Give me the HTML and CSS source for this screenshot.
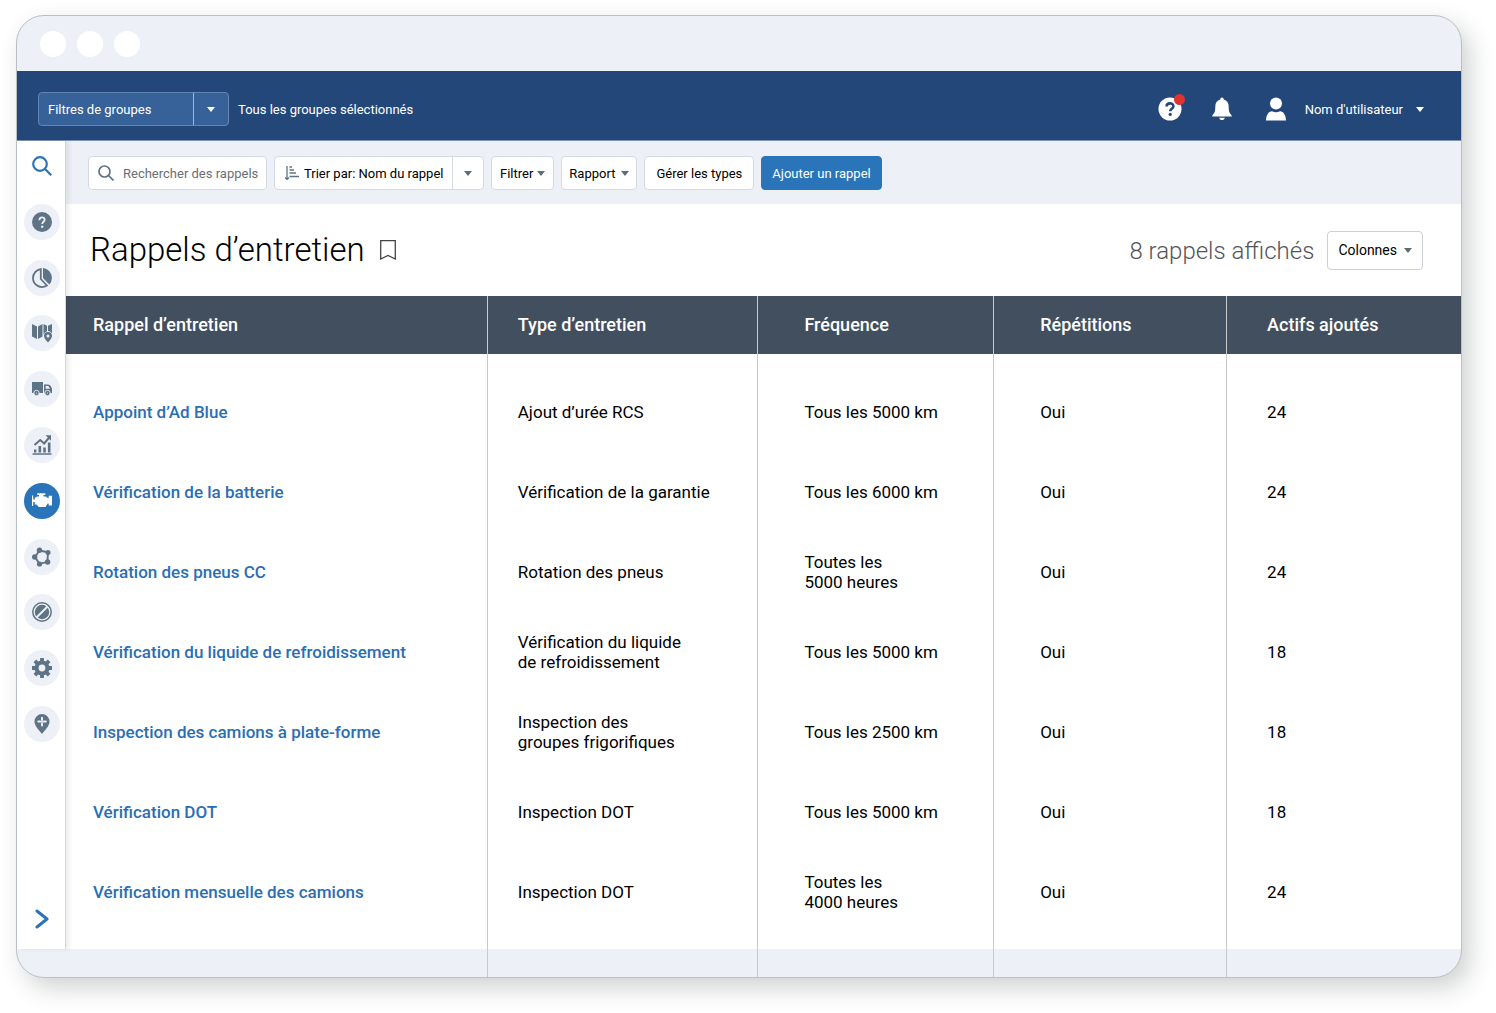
FILE: index.html
```html
<!doctype html>
<html lang="fr">
<head>
    <meta charset="utf-8">
    <meta name="viewport" content="width=device-width, initial-scale=1">
    <title>Rappels d’entretien</title>
    <link rel="stylesheet" href="styles.css">
</head>
<body>
<div class="window">
    <div class="titlebar">
        <span class="dot"></span>
        <span class="dot"></span>
        <span class="dot"></span>
    </div>

    <header class="topbar">
        <div class="split split-dark">
            <select class="split-select" aria-label="Filtres de groupes">
                <option>Filtres de groupes</option>
            </select>
            <span class="split-arrow"><i class="caret"></i></span>
        </div>
        <span class="groups">Tous les groupes sélectionnés</span>

        <div class="account">
            <button class="icon-btn help" aria-label="Aide">
                <svg width="24" height="24" viewBox="0 0 24 24">
                    <circle cx="12" cy="12" r="11.5" fill="#fff"/>
                    <path d="M8.600 9.600c0-4.300 6.800-4.200 6.800-.4 0 2.400-3.200 2.500-3.200 5" fill="none" stroke="#24477a" stroke-width="2.600"/>
                    <circle cx="12.200" cy="17.400" r="1.600" fill="#24477a"/>
                </svg>
                <span class="badge"></span>
            </button>
            <button class="icon-btn" aria-label="Notifications">
                <svg width="20" height="24" viewBox="0 0 20 24">
                    <path d="M10 .5c1 0 1.700.7 1.700 1.900 3.300.8 5 3.400 5 7.100 0 5 .8 6.800 3 8.900v1.100H.3v-1.100c2.200-2.100 3-3.900 3-8.900 0-3.700 1.700-6.300 5-7.100C8.300 1.200 9 .5 10 .5zM7.200 20.700h5.600c-.4 3.200-5.200 3.200-5.600 0z" fill="#fff"/>
                </svg>
            </button>
            <button class="user">
                <svg width="20" height="24" viewBox="0 0 20 24">
                    <circle cx="10" cy="6.500" r="6" fill="#fff"/>
                    <path d="M0 23.500c0-5 2.500-9.300 6-9.300 2.500 1.300 5.500 1.300 8 0 3.500 0 6 4.300 6 9.300z" fill="#fff"/>
                </svg>
                <span>Nom d'utilisateur</span>
                <i class="caret"></i>
            </button>
        </div>
    </header>

    <div class="content">
        <nav class="sidebar">
            <div class="side-links">
                <a href="#" class="side-link plain" aria-label="Rechercher">
                    <svg width="20" height="20" viewBox="0 0 20 20" fill="none" stroke="#2a74b9" stroke-width="2.200">
                        <circle cx="8" cy="8" r="6.800"/><path d="M12.800 12.800l6.400 6.400"/>
                    </svg>
                </a>
                <a href="#" class="side-link" aria-label="Aide">
                    <svg width="20" height="20" viewBox="0 0 20 20">
                        <circle cx="10" cy="10" r="10"/>
                        <path d="M7.400 8.200c0-3.700 5.300-3.500 5.300-.4 0 2-2.500 2-2.500 4.300" fill="none" stroke="#edf0f6" stroke-width="1.800"/>
                        <circle cx="10.200" cy="14.700" r="1.200" fill="#edf0f6"/>
                    </svg>
                </a>
                <a href="#" class="side-link" aria-label="Tableau de bord">
                    <svg width="20" height="20" viewBox="0 0 20 20">
                        <path d="M8.800 1.100A9 9 0 0 0 1 10a9 9 0 0 0 13.900 7.500L8.800 11z" fill="none" stroke="#5f7386" stroke-width="1.800"/>
                        <path d="M11 0a10 10 0 0 1 6.300 16.500L11 10z"/>
                    </svg>
                </a>
                <a href="#" class="side-link" aria-label="Carte">
                    <svg width="20" height="20" viewBox="0 0 20 20">
                        <path d="M0 1l5 2.500V16l-5-2.500zM6 3.500L10.500 1v12.500L6 16zM11.500 1L15 2.800v5.400c-2.700.8-4 3.300-3.500 5.300zM16 2.800L20 1v9.500c-.8-1.700-2.300-2.600-4-2.600z"/>
                        <path fill-rule="evenodd" d="M16 9a4 4 0 0 1 4 4c0 2.500-2.500 4.500-4 6.500-1.500-2-4-4-4-6.500a4 4 0 0 1 4-4zm0 2.500a1.500 1.500 0 1 0 0 3 1.500 1.500 0 0 0 0-3z"/>
                    </svg>
                </a>
                <a href="#" class="side-link" aria-label="Véhicules">
                    <svg width="20" height="20" viewBox="0 0 20 20">
                        <path fill-rule="evenodd" d="M0 3h11v11H0zM12 5.500h4.200c1.800 0 3.800 3 3.800 4.500v4h-8zm1.600 1.600v2.700h4.200c-.3-1.200-1-2.700-2-2.700z"/>
                        <g stroke="#edf0f6" stroke-width=".9"><circle cx="4.500" cy="14" r="2.700"/><circle cx="15.500" cy="14" r="2.700"/></g>
                        <circle cx="4.500" cy="14" r=".6" fill="#edf0f6"/><circle cx="15.500" cy="14" r=".6" fill="#edf0f6"/>
                    </svg>
                </a>
                <a href="#" class="side-link" aria-label="Activité">
                    <svg width="20" height="20" viewBox="0 0 20 20">
                        <path d="M.5 18.300h19v1.500H.5zM2 14.500h2.400v3H2zM6.500 11h2.600v6.500H6.500zM11.200 12.500h2.600v5h-2.600zM15.900 7.500h2.600v10h-2.600zM13.500.3H19v5.500z"/>
                        <path d="M2.500 10l5.700-5 4 3.500 5-6" fill="none" stroke="#5f7386" stroke-width="2"/>
                    </svg>
                </a>
                <a href="#" class="side-link active" aria-label="Entretien">
                    <svg width="20" height="20" viewBox="0 0 20 20">
                        <path d="M0 4.500h1.200v4h1.600V6.700L5 5.500h2V4H5.300V2.300h8V4h-1.800v1.500H14L15.700 7h1V4.800H20v9.700h-3.300v-2h-1L13.500 16H6.800l-2.300-2.500H2.800V11H1.200v4H0z"/>
                    </svg>
                </a>
                <a href="#" class="side-link" aria-label="Zones">
                    <svg width="20" height="20" viewBox="0 0 20 20">
                        <path d="M7.500 3.500l8.500 1.700-.6 9.600-7.900 2L3 10z" fill="none" stroke="#5f7386" stroke-width="1.900"/>
                        <circle cx="7.500" cy="3.200" r="2.700"/><circle cx="16" cy="5.400" r="2.500"/><circle cx="15.600" cy="15" r="2.700"/><circle cx="7.500" cy="17" r="2.600"/><circle cx="2.700" cy="10" r="2.700"/>
                    </svg>
                </a>
                <a href="#" class="side-link" aria-label="Règles">
                    <svg width="20" height="20" viewBox="0 0 20 20">
                        <circle cx="10" cy="10" r="9.200" fill="none" stroke="#5f7386" stroke-width="1.500"/>
                        <circle cx="10" cy="10" r="7.200"/>
                        <path d="M4.500 15.500l11-11" stroke="#edf0f6" stroke-width="2"/>
                    </svg>
                </a>
                <a href="#" class="side-link" aria-label="Administration">
                    <svg width="20" height="20" viewBox="0 0 20 20">
                        <circle cx="10" cy="10" r="5.500" fill="none" stroke="#5f7386" stroke-width="4.200"/>
                        <path d="M10 0v4M10 16v4M0 10h4M16 10h4M2.900 2.900l3 3M14.100 14.100l3 3M2.900 17.100l3-3M14.100 5.900l3-3" stroke="#5f7386" stroke-width="3.800"/>
                    </svg>
                </a>
                <a href="#" class="side-link" aria-label="Lieux">
                    <svg width="20" height="20" viewBox="0 0 20 20">
                        <path d="M10 0a7.500 7.500 0 0 1 7.500 7.500c0 4.500-4.500 8.500-7.500 12.500-3-4-7.500-8-7.500-12.500A7.500 7.500 0 0 1 10 0z"/>
                        <path d="M10 3.800v2M10 9.400v2M6.200 7.600h2M11.800 7.600h2" stroke="#edf0f6" stroke-width="2" stroke-linecap="round"/>
                        <path d="M10 4v7.200M6.400 7.600h7.200" stroke="#edf0f6" stroke-width=".9"/>
                    </svg>
                </a>
            </div>
            <button class="expand" aria-label="Développer le menu">
                <svg width="14" height="20" viewBox="0 0 14 20" fill="none" stroke="#2a74b9" stroke-width="3" stroke-linecap="round" stroke-linejoin="round">
                    <path d="M2 2l10 8-10 8"/>
                </svg>
            </button>
        </nav>

        <main class="main">
            <div class="toolbar">
                <label class="search">
                    <svg width="16" height="16" viewBox="0 0 16 16" fill="none" stroke="#5f7386" stroke-width="1.700">
                        <circle cx="6.500" cy="6.500" r="5.500"/><path d="M10.500 10.500l5 5"/>
                    </svg>
                    <input type="text" placeholder="Rechercher des rappels" aria-label="Rechercher des rappels">
                </label>
                <div class="split sort">
                    <svg class="sort-icon" width="14" height="14" viewBox="0 0 14 14" fill="none" stroke="#5f7386" stroke-width="1.300">
                        <path d="M2 0v13M0 11.500l2 2 2-2M4.500 1h2.500M4.500 4h4.500M4.500 7h6.500M4.500 10.500H14"/>
                    </svg>
                    <select class="split-select" aria-label="Trier les rappels">
                        <option>Trier par: Nom du rappel</option>
                    </select>
                    <span class="split-arrow"><i class="caret"></i></span>
                </div>
                <button class="btn" aria-haspopup="true">Filtrer <i class="caret"></i></button>
                <button class="btn btn-report" aria-haspopup="true">Rapport <i class="caret"></i></button>
                <button class="btn btn-types">Gérer les types</button>
                <button class="btn btn-primary">Ajouter un rappel</button>
            </div>

            <div class="heading">
                <h1>Rappels d’entretien</h1>
                <button class="icon-btn" aria-label="Ajouter aux favoris">
                    <svg width="16" height="20" viewBox="0 0 16 20" fill="none" stroke="#444" stroke-width="1.300">
                        <path d="M.7.7h14.600v18.300L8 15.500.7 19z"/>
                    </svg>
                </button>
                <span class="count">8 rappels affichés</span>
                <button class="btn btn-columns" aria-haspopup="true">Colonnes <i class="caret"></i></button>
            </div>

            <table class="reminders">
                <colgroup>
                    <col class="col-name">
                    <col class="col-type">
                    <col class="col-freq">
                    <col class="col-repeat">
                    <col class="col-assets">
                </colgroup>
                <thead>
                    <tr>
                        <th>Rappel d’entretien</th>
                        <th>Type d’entretien</th>
                        <th>Fréquence</th>
                        <th>Répétitions</th>
                        <th>Actifs ajoutés</th>
                    </tr>
                </thead>
                <tbody>
                    <tr>
                        <td><a href="#">Appoint d’Ad Blue</a></td>
                        <td>Ajout d’urée RCS</td>
                        <td>Tous les 5000 km</td>
                        <td>Oui</td>
                        <td>24</td>
                    </tr>
                    <tr>
                        <td><a href="#">Vérification de la batterie</a></td>
                        <td>Vérification de la garantie</td>
                        <td>Tous les 6000 km</td>
                        <td>Oui</td>
                        <td>24</td>
                    </tr>
                    <tr>
                        <td><a href="#">Rotation des pneus CC</a></td>
                        <td>Rotation des pneus</td>
                        <td>Toutes les<br>5000 heures</td>
                        <td>Oui</td>
                        <td>24</td>
                    </tr>
                    <tr>
                        <td><a href="#">Vérification du liquide de refroidissement</a></td>
                        <td>Vérification du liquide<br>de refroidissement</td>
                        <td>Tous les 5000 km</td>
                        <td>Oui</td>
                        <td>18</td>
                    </tr>
                    <tr>
                        <td><a href="#">Inspection des camions à plate-forme</a></td>
                        <td>Inspection des<br>groupes frigorifiques</td>
                        <td>Tous les 2500 km</td>
                        <td>Oui</td>
                        <td>18</td>
                    </tr>
                    <tr>
                        <td><a href="#">Vérification DOT</a></td>
                        <td>Inspection DOT</td>
                        <td>Tous les 5000 km</td>
                        <td>Oui</td>
                        <td>18</td>
                    </tr>
                    <tr>
                        <td><a href="#">Vérification mensuelle des camions</a></td>
                        <td>Inspection DOT</td>
                        <td>Toutes les<br>4000 heures</td>
                        <td>Oui</td>
                        <td>24</td>
                    </tr>
                </tbody>
                <tfoot>
                    <tr><td></td><td></td><td></td><td></td><td></td></tr>
                </tfoot>
            </table>
        </main>
    </div>
</div>
</body>
</html>
```
FILE: styles.css
```css
* {
    box-sizing: border-box;
}
body {
    margin: 0;
    padding: 15px 34px 35px 16px;
    background: #fff;
    color: #000;
    font-family: Roboto, "Liberation Sans", sans-serif;
    font-size: 13px;
}
button, input, select {
    font: inherit;
    color: inherit;
}
button, select {
    cursor: pointer;
}
.window {
    border: 1px solid #b9c0c4;
    border-radius: 28px;
    overflow: hidden;
    background: #edf0f6;
    box-shadow: 8px 10px 24px rgba(40, 50, 50, 0.22);
}
.titlebar {
    display: flex;
    align-items: center;
    gap: 11px;
    height: 55px;
    padding-left: 23px;
}
.dot {
    width: 26px;
    height: 26px;
    border-radius: 50%;
    background: #fff;
}

/* top bar */
.topbar {
    display: flex;
    align-items: center;
    height: 70px;
    padding: 7px 37px 0 21px;
    border-bottom: 1px solid #7b93b5;
    background: #24477a;
    color: #fff;
}
.topbar .caret {
    border-top-color: #fff;
}
.groups {
    margin-left: 9px;
}
.account {
    display: flex;
    align-items: center;
    gap: 30px;
    margin-left: auto;
}
.icon-btn {
    display: flex;
    padding: 0;
    border: 0;
    background: none;
}
.help {
    position: relative;
}
.badge {
    position: absolute;
    top: -3px;
    right: -3px;
    width: 11px;
    height: 11px;
    border-radius: 50%;
    background: #e0332f;
}
.user {
    display: flex;
    align-items: center;
    padding: 0;
    border: 0;
    background: none;
}
.user span {
    margin: 0 13px 0 19px;
}
.user svg {
    margin-left: 4px;
}
.caret {
    display: inline-block;
    border: 4px solid transparent;
    border-top: 5px solid #5f6b78;
    border-bottom: 0;
}

/* select with a separate arrow cell */
.split {
    display: flex;
    position: relative;
    height: 34px;
    border: 1px solid #d5dae2;
    border-radius: 4px;
    background: #fff;
}
.split-select {
    width: 100%;
    padding: 0 42px 0 9px;
    border: 0;
    background: none;
    appearance: none;
}
.split-arrow {
    display: flex;
    position: absolute;
    top: 0;
    right: 0;
    bottom: 0;
    align-items: center;
    justify-content: center;
    width: 31px;
    border-left: 1px solid #d5dae2;
    pointer-events: none;
}
.split-dark {
    width: 191px;
    border-color: #6486b4;
    background: #376199;
}
.split-dark .split-arrow {
    width: 35px;
    border-color: #a3b7d2;
}

/* side menu */
.content {
    display: flex;
}
.sidebar {
    display: flex;
    position: relative;
    z-index: 1;
    flex: none;
    flex-direction: column;
    align-items: center;
    width: 49px;
    margin-bottom: 28px;
    padding: 7px 0 18px 1px;
    border-right: 1px solid #d4d6da;
    background: #fff;
    box-shadow: 3px 0 5px rgba(0, 0, 0, 0.08);
}
.side-links {
    display: flex;
    flex-direction: column;
    justify-content: space-between;
    height: 594px;
}
.side-link {
    display: flex;
    align-items: center;
    justify-content: center;
    width: 36px;
    height: 36px;
    border-radius: 50%;
    background: #edf0f6;
    fill: #5f7386;
}
.side-link.plain {
    background: none;
}
.side-link.active {
    background: #2a74b9;
    fill: #fff;
}
.expand {
    display: flex;
    margin-top: auto;
    padding: 2px;
    border: 0;
    background: none;
}

/* toolbar */
.main {
    flex: 1;
    min-width: 0;
}
.toolbar {
    display: flex;
    gap: 7px;
    padding: 15px 22px 14px;
}
.search {
    display: flex;
    align-items: center;
    gap: 9px;
    width: 179px;
    height: 34px;
    padding-left: 9px;
    border: 1px solid #d5dae2;
    border-radius: 4px;
    background: #fff;
}
.search svg {
    flex: none;
}
.search input {
    width: 100%;
    min-width: 0;
    padding: 0;
    border: 0;
    outline: 0;
    background: none;
}
.search input::placeholder {
    color: #6a6f76;
}
.sort {
    align-items: center;
    width: 210px;
    padding-left: 10px;
}
.sort-icon {
    flex: none;
}
.sort .split-select {
    padding: 0 32px 0 5px;
}
.btn {
    display: flex;
    align-items: center;
    justify-content: center;
    gap: 4px;
    height: 34px;
    padding: 0 8px;
    border: 1px solid #d5dae2;
    border-radius: 4px;
    background: #fff;
}
.btn-report {
    gap: 6px;
    padding: 0 7px;
}
.btn-types {
    padding: 0 11px;
}
.btn-primary {
    padding: 0 10px;
    border-color: #2a74b9;
    background: #2a74b9;
    color: #fff;
}

/* page heading */
.heading {
    display: flex;
    align-items: center;
    height: 92px;
    padding: 0 38px 0 24px;
    background: #fff;
}
h1 {
    margin: 0 15px 2px 0;
    font-size: 33px;
    font-weight: 300;
}
.count {
    margin: 2px 13px 0 auto;
    color: #555;
    font-size: 24px;
    font-weight: 300;
}
.btn-columns {
    gap: 7px;
    height: 39px;
    padding: 0 10px;
    border-color: #ccd0d5;
    font-size: 14px;
}

/* reminders */
.reminders {
    width: 100%;
    border-collapse: collapse;
    table-layout: fixed;
    font-size: 17px;
    line-height: 20px;
}
.col-name {
    width: 30.2%;
}
.col-type {
    width: 19.4%;
}
.col-freq {
    width: 16.9%;
}
.col-repeat {
    width: 16.7%;
}
.col-assets {
    width: 16.8%;
}
.reminders th {
    height: 58px;
    background: #424f5f;
    color: #fff;
    font-size: 18px;
    font-weight: 500;
    text-align: left;
}
.reminders th,
.reminders td {
    padding: 0 0 0 46px;
    border-left: 1px solid #c6cacf;
}
.reminders th:nth-child(1),
.reminders td:nth-child(1) {
    padding-left: 27px;
    border-left: 0;
}
.reminders th:nth-child(2),
.reminders td:nth-child(2) {
    padding-left: 30px;
}
.reminders th:nth-child(5),
.reminders td:nth-child(5) {
    padding-left: 40px;
}
.reminders tbody {
    background: #fff;
}
.reminders tbody td {
    height: 80px;
}
.reminders tbody tr:first-child td {
    height: 98px;
    padding-top: 18px;
}
.reminders tbody tr:last-child td {
    height: 97px;
    padding-bottom: 17px;
}
.reminders tfoot td {
    height: 28px;
}
.reminders a {
    color: #2a6fb3;
    font-weight: 500;
    text-decoration: none;
}
.reminders a:hover {
    text-decoration: underline;
}
```
